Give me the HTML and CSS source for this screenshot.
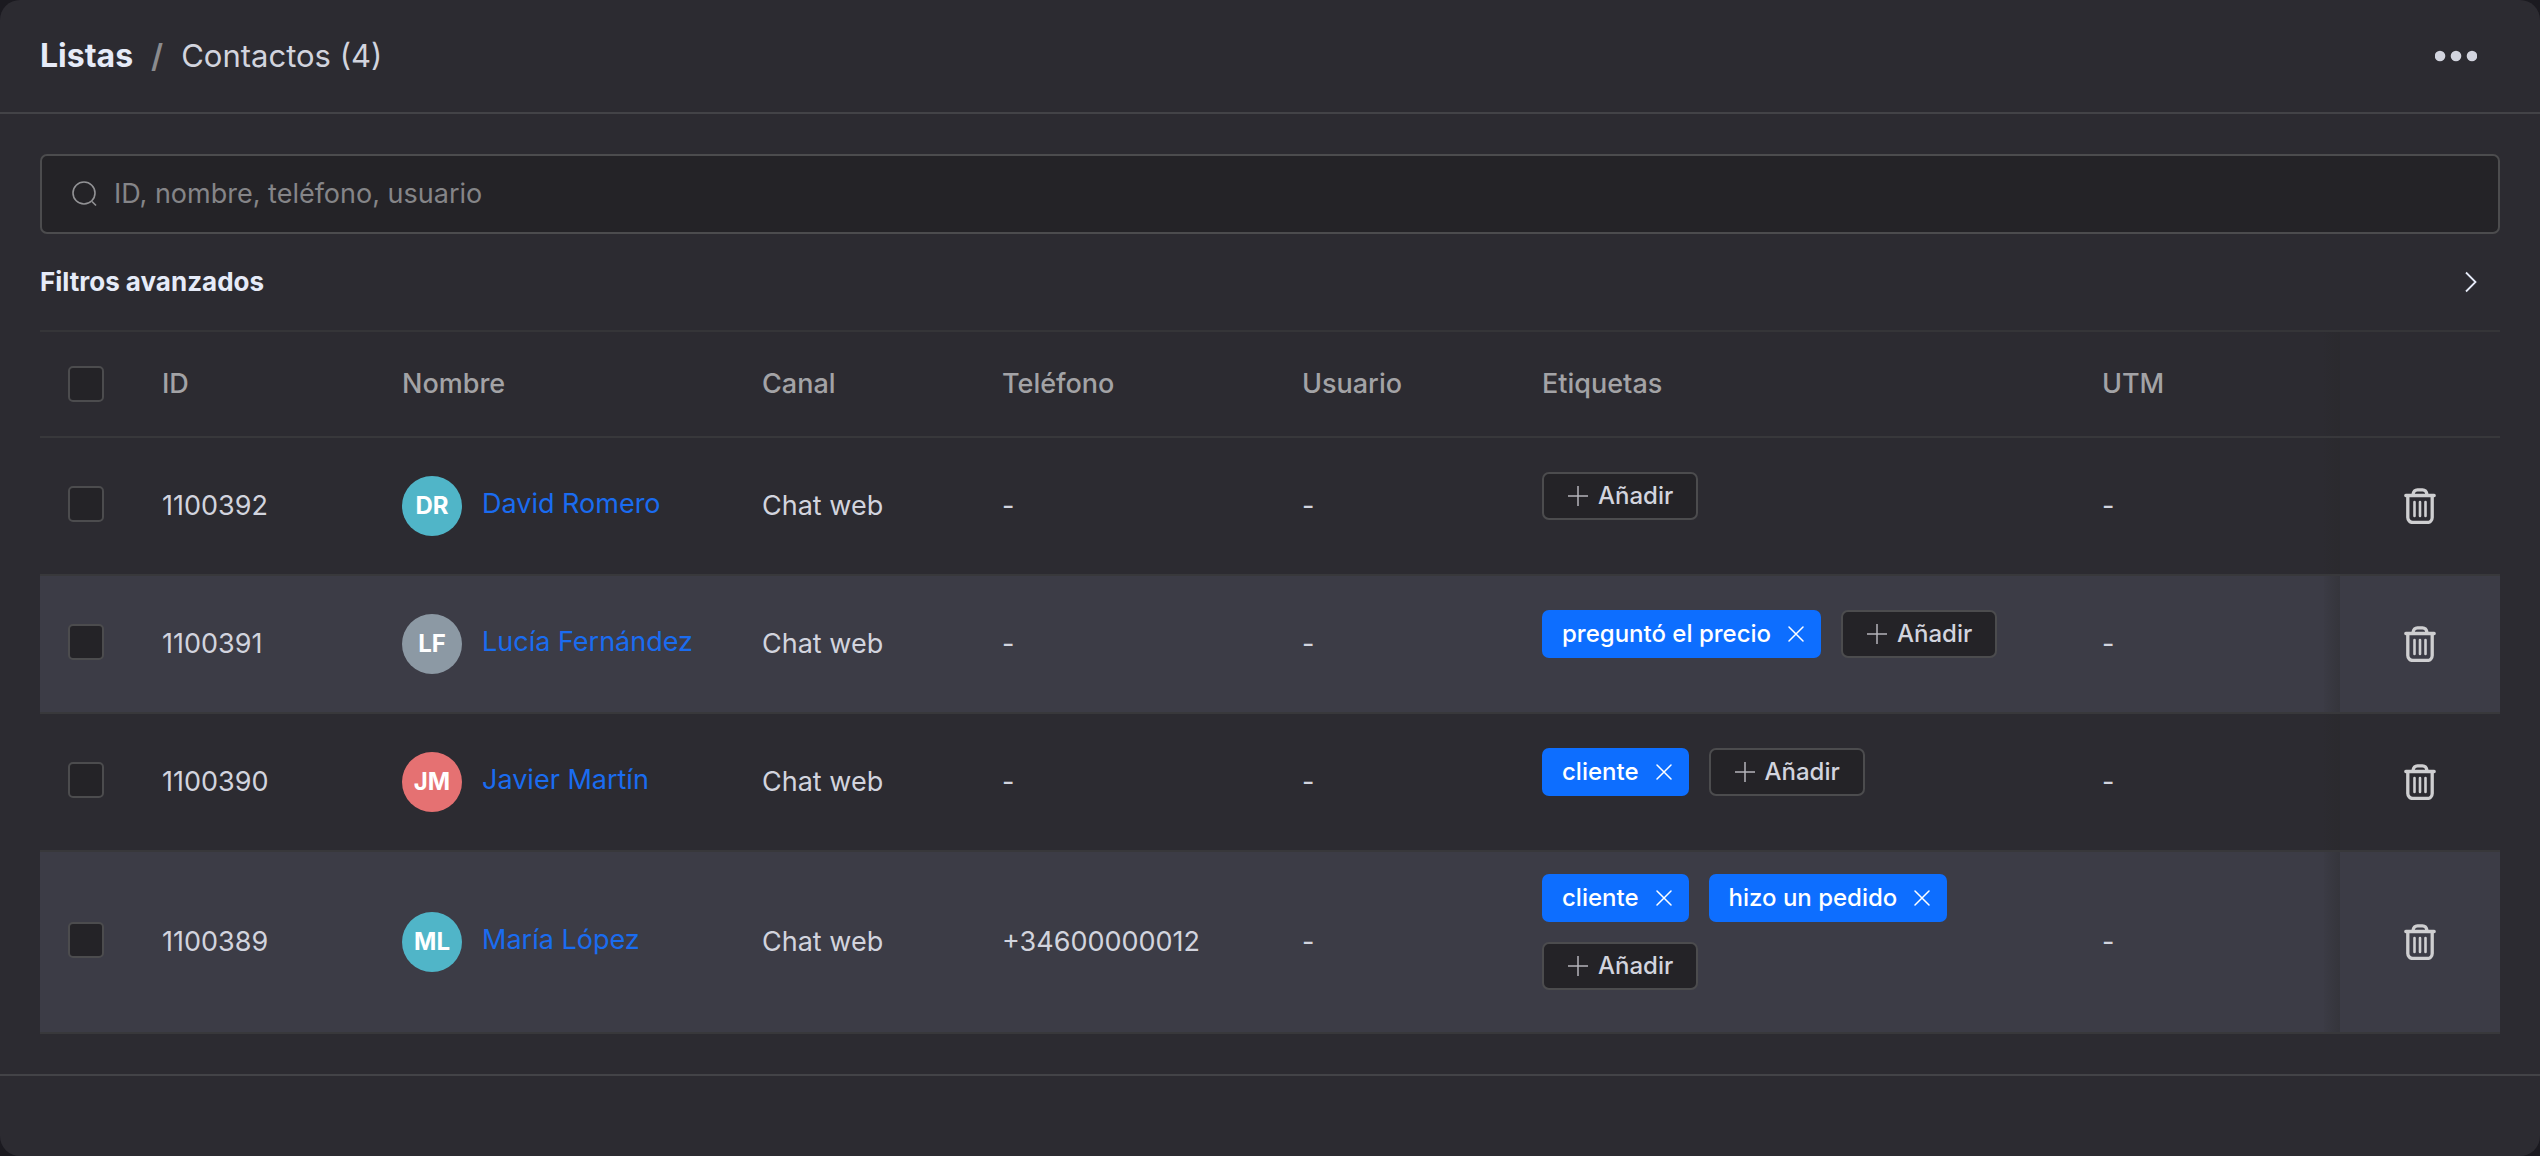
FILE: index.html
```html
<!DOCTYPE html>
<html lang="es">
<head>
    <meta charset="UTF-8">
    <meta name="viewport" content="width=device-width, initial-scale=1.0">
    <title>Listas / Contactos</title>
    <link rel="stylesheet" href="styles.css">
</head>
<body>
    <!-- Shared icons -->
    <svg class="icon-sprite" aria-hidden="true">
        <symbol id="icon-trash" viewBox="0 0 32 36">
            <path d="M1.800 7.500h28.400M9 6.500C9.500 3 11.500 1.800 13.500 1.800h5c2 0 4 1.200 4.500 4.700M3.800 8v21.500a5 5 0 0 0 5 5h14.400a5 5 0 0 0 5-5V8" fill="none" stroke="currentColor" stroke-width="3.300" stroke-linecap="round"/>
            <path d="M10.500 14v14M16 14v14M21.500 14v14" fill="none" stroke="currentColor" stroke-width="2.600" stroke-linecap="round"/>
        </symbol>
        <symbol id="icon-close" viewBox="0 0 16 16">
            <path d="M1 1l14 14M15 1L1 15" fill="none" stroke="currentColor" stroke-width="1.500" stroke-linecap="round"/>
        </symbol>
        <symbol id="icon-plus" viewBox="0 0 20 20">
            <path d="M10 0v20M0 10h20" fill="none" stroke="currentColor" stroke-width="1.500"/>
        </symbol>
    </svg>

    <div class="panel">
        <header class="panel-header">
            <nav class="breadcrumb">
                <a href="#" class="breadcrumb-root">Listas</a>
                <span class="breadcrumb-divider">/</span>
                <h1>Contactos (4)</h1>
            </nav>
            <button type="button" class="icon-btn" aria-label="Más opciones">
                <svg width="42" height="12" viewBox="0 0 42 12" fill="currentColor">
                    <circle cx="5" cy="6" r="5.300"/>
                    <circle cx="21" cy="6" r="5.300"/>
                    <circle cx="37" cy="6" r="5.300"/>
                </svg>
            </button>
        </header>

        <main>
            <label class="search-box">
                <svg width="26" height="26" viewBox="0 0 26 26" fill="none" stroke="currentColor" stroke-width="1.600">
                    <circle cx="12" cy="12" r="11"/>
                    <path d="M20 20.500l4 4"/>
                </svg>
                <input type="text" placeholder="ID, nombre, teléfono, usuario" aria-label="Buscar contactos">
            </label>

            <button type="button" class="filters-toggle">
                <span>Filtros avanzados</span>
                <svg width="12" height="22" viewBox="0 0 12 22" fill="none" stroke="currentColor" stroke-width="1.800">
                    <path d="M1 1.500L10.500 11L1 20.500"/>
                </svg>
            </button>

            <table class="contacts-table">
                <colgroup>
                    <col class="col-check">
                    <col class="col-id">
                    <col class="col-name">
                    <col class="col-channel">
                    <col class="col-phone">
                    <col class="col-user">
                    <col class="col-tags">
                    <col class="col-utm">
                    <col class="col-actions">
                </colgroup>
                <thead>
                    <tr>
                        <th class="check-cell"><input type="checkbox" aria-label="Seleccionar todos"></th>
                        <th>ID</th>
                        <th>Nombre</th>
                        <th>Canal</th>
                        <th>Teléfono</th>
                        <th>Usuario</th>
                        <th>Etiquetas</th>
                        <th>UTM</th>
                        <th class="actions-cell"></th>
                    </tr>
                </thead>
                <tbody>
                    <tr>
                        <td class="check-cell"><input type="checkbox" aria-label="Seleccionar David Romero"></td>
                        <td>1100392</td>
                        <td><span class="avatar avatar-teal">DR</span><a href="#">David Romero</a></td>
                        <td>Chat web</td>
                        <td>-</td>
                        <td>-</td>
                        <td>
                            <div class="tags">
                                <button type="button" class="add-btn"><svg width="20" height="20"><use href="#icon-plus"/></svg>Añadir</button>
                            </div>
                        </td>
                        <td>-</td>
                        <td class="actions-cell"><button type="button" class="icon-btn" aria-label="Eliminar"><svg width="32" height="36"><use href="#icon-trash"/></svg></button></td>
                    </tr>
                    <tr>
                        <td class="check-cell"><input type="checkbox" aria-label="Seleccionar Lucía Fernández"></td>
                        <td>1100391</td>
                        <td><span class="avatar avatar-gray">LF</span><a href="#">Lucía Fernández</a></td>
                        <td>Chat web</td>
                        <td>-</td>
                        <td>-</td>
                        <td>
                            <div class="tags">
                                <span class="tag">preguntó el precio<button type="button" aria-label="Quitar"><svg width="16" height="16"><use href="#icon-close"/></svg></button></span>
                                <button type="button" class="add-btn"><svg width="20" height="20"><use href="#icon-plus"/></svg>Añadir</button>
                            </div>
                        </td>
                        <td>-</td>
                        <td class="actions-cell"><button type="button" class="icon-btn" aria-label="Eliminar"><svg width="32" height="36"><use href="#icon-trash"/></svg></button></td>
                    </tr>
                    <tr>
                        <td class="check-cell"><input type="checkbox" aria-label="Seleccionar Javier Martín"></td>
                        <td>1100390</td>
                        <td><span class="avatar avatar-red">JM</span><a href="#">Javier Martín</a></td>
                        <td>Chat web</td>
                        <td>-</td>
                        <td>-</td>
                        <td>
                            <div class="tags">
                                <span class="tag">cliente<button type="button" aria-label="Quitar"><svg width="16" height="16"><use href="#icon-close"/></svg></button></span>
                                <button type="button" class="add-btn"><svg width="20" height="20"><use href="#icon-plus"/></svg>Añadir</button>
                            </div>
                        </td>
                        <td>-</td>
                        <td class="actions-cell"><button type="button" class="icon-btn" aria-label="Eliminar"><svg width="32" height="36"><use href="#icon-trash"/></svg></button></td>
                    </tr>
                    <tr>
                        <td class="check-cell"><input type="checkbox" aria-label="Seleccionar María López"></td>
                        <td>1100389</td>
                        <td><span class="avatar avatar-teal">ML</span><a href="#">María López</a></td>
                        <td>Chat web</td>
                        <td>+34600000012</td>
                        <td>-</td>
                        <td>
                            <div class="tags">
                                <span class="tag">cliente<button type="button" aria-label="Quitar"><svg width="16" height="16"><use href="#icon-close"/></svg></button></span>
                                <span class="tag">hizo un pedido<button type="button" aria-label="Quitar"><svg width="16" height="16"><use href="#icon-close"/></svg></button></span>
                                <button type="button" class="add-btn"><svg width="20" height="20"><use href="#icon-plus"/></svg>Añadir</button>
                            </div>
                        </td>
                        <td>-</td>
                        <td class="actions-cell"><button type="button" class="icon-btn" aria-label="Eliminar"><svg width="32" height="36"><use href="#icon-trash"/></svg></button></td>
                    </tr>
                </tbody>
            </table>
        </main>

        <footer class="panel-footer"></footer>
    </div>
</body>
</html>
```

FILE: styles.css
```css
/* Reset and Base Styles */
* {
    margin: 0;
    padding: 0;
    box-sizing: border-box;
}

body {
    font-family: Inter, 'Liberation Sans', sans-serif;
    font-size: 27px;
    line-height: 36px;
    background: #1b1a20;
    color: #d2d4de;
}

button,
input {
    font: inherit;
    color: inherit;
}

button {
    background: none;
    border: none;
    cursor: pointer;
}

svg {
    display: block;
    flex-shrink: 0;
}

.icon-sprite {
    display: none;
}

.panel {
    display: flex;
    flex-direction: column;
    min-height: 100vh;
    background: #2c2b31;
    border-radius: 20px;
}

/* Header */
.panel-header {
    display: flex;
    justify-content: space-between;
    align-items: center;
    height: 114px;
    padding: 0 63px 0 40px;
    border-bottom: 2px solid #434347;
}

.breadcrumb {
    display: flex;
    align-items: center;
    gap: 18px;
    font-size: 32px;
}

.breadcrumb-root {
    color: #e6ebf8;
    font-weight: 700;
    text-decoration: none;
}

.breadcrumb-divider {
    color: #8b8b8e;
    font-weight: 600;
}

.breadcrumb h1 {
    font-size: 31px;
    font-weight: 400;
}

/* Main Content */
main {
    flex: 1;
    padding: 40px;
}

.search-box {
    display: flex;
    align-items: center;
    gap: 16px;
    height: 80px;
    padding: 0 30px;
    background: #242327;
    border: 2px solid #4c4c4e;
    border-radius: 7px;
    color: #929295;
}

.search-box input {
    flex: 1;
    background: none;
    border: none;
    outline: none;
}

.search-box input::placeholder {
    color: #858588;
    opacity: 1;
}

.filters-toggle {
    display: flex;
    justify-content: space-between;
    align-items: center;
    width: 100%;
    height: 96px;
    padding-right: 23px;
    color: #e6ebf8;
    font-size: 26px;
    font-weight: 700;
}

/* Contacts Table */
.contacts-table {
    width: 100%;
    table-layout: fixed;
    border-collapse: separate;
    border-spacing: 0;
    border-top: 2px solid #353538;
}

.col-check {
    width: 102px;
}

.col-id,
.col-channel,
.col-user {
    width: 240px;
}

.col-name {
    width: 360px;
}

.col-phone {
    width: 300px;
}

.col-tags {
    width: 560px;
}

.col-actions {
    width: 160px;
}

.contacts-table th,
.contacts-table td {
    padding: 22px 20px;
    text-align: left;
    vertical-align: middle;
    border-bottom: 2px solid #38383b;
}

.contacts-table th {
    height: 106px;
    color: #a3a3a6;
    font-weight: 500;
}

.contacts-table td {
    height: 138px;
}

.contacts-table tbody tr:nth-child(even) {
    background: #3c3c46;
}

.contacts-table .check-cell {
    padding-left: 28px;
}

.contacts-table td.check-cell {
    padding-bottom: 26px;
}

.contacts-table a {
    color: #1a6cf0;
    text-decoration: none;
}

input[type="checkbox"] {
    appearance: none;
    display: block;
    width: 36px;
    height: 36px;
    background: #242327;
    border: 2px solid #4c4c4e;
    border-radius: 5px;
}

input[type="checkbox"]:checked {
    background: #0d6eff;
}

.avatar {
    display: inline-block;
    width: 60px;
    height: 60px;
    margin-right: 20px;
    border-radius: 50%;
    color: #fff;
    font-size: 24px;
    font-weight: 700;
    line-height: 60px;
    text-align: center;
    vertical-align: middle;
}

.avatar-teal {
    background: #50b5c8;
}

.avatar-gray {
    background: #8c99a4;
}

.avatar-red {
    background: #e57172;
}

/* Tags */
.tags {
    display: flex;
    flex-wrap: wrap;
    column-gap: 20px;
}

.tag,
.add-btn {
    display: flex;
    align-items: center;
    height: 48px;
    margin-bottom: 20px;
    border-radius: 7px;
    font-size: 24px;
    font-weight: 500;
}

.tag {
    gap: 17px;
    padding: 0 17px 0 20px;
    background: #0d6eff;
    color: #fff;
}

.add-btn {
    gap: 10px;
    padding: 0 23px 0 24px;
    background: #242327;
    border: 2px solid #4c4c4e;
}

.add-btn svg {
    color: #b4b4ba;
}

.contacts-table .actions-cell {
    position: relative;
}

.actions-cell::before {
    content: "";
    position: absolute;
    top: 0;
    right: 100%;
    bottom: 0;
    width: 16px;
    background: linear-gradient(to right, rgba(40, 40, 40, 0.05), rgba(40, 40, 40, 0.35));
}

.actions-cell .icon-btn {
    display: block;
    margin: 0 auto;
    color: #cfcfd1;
}

/* Footer */
.panel-footer {
    height: 82px;
    border-top: 2px solid #434347;
}
```
